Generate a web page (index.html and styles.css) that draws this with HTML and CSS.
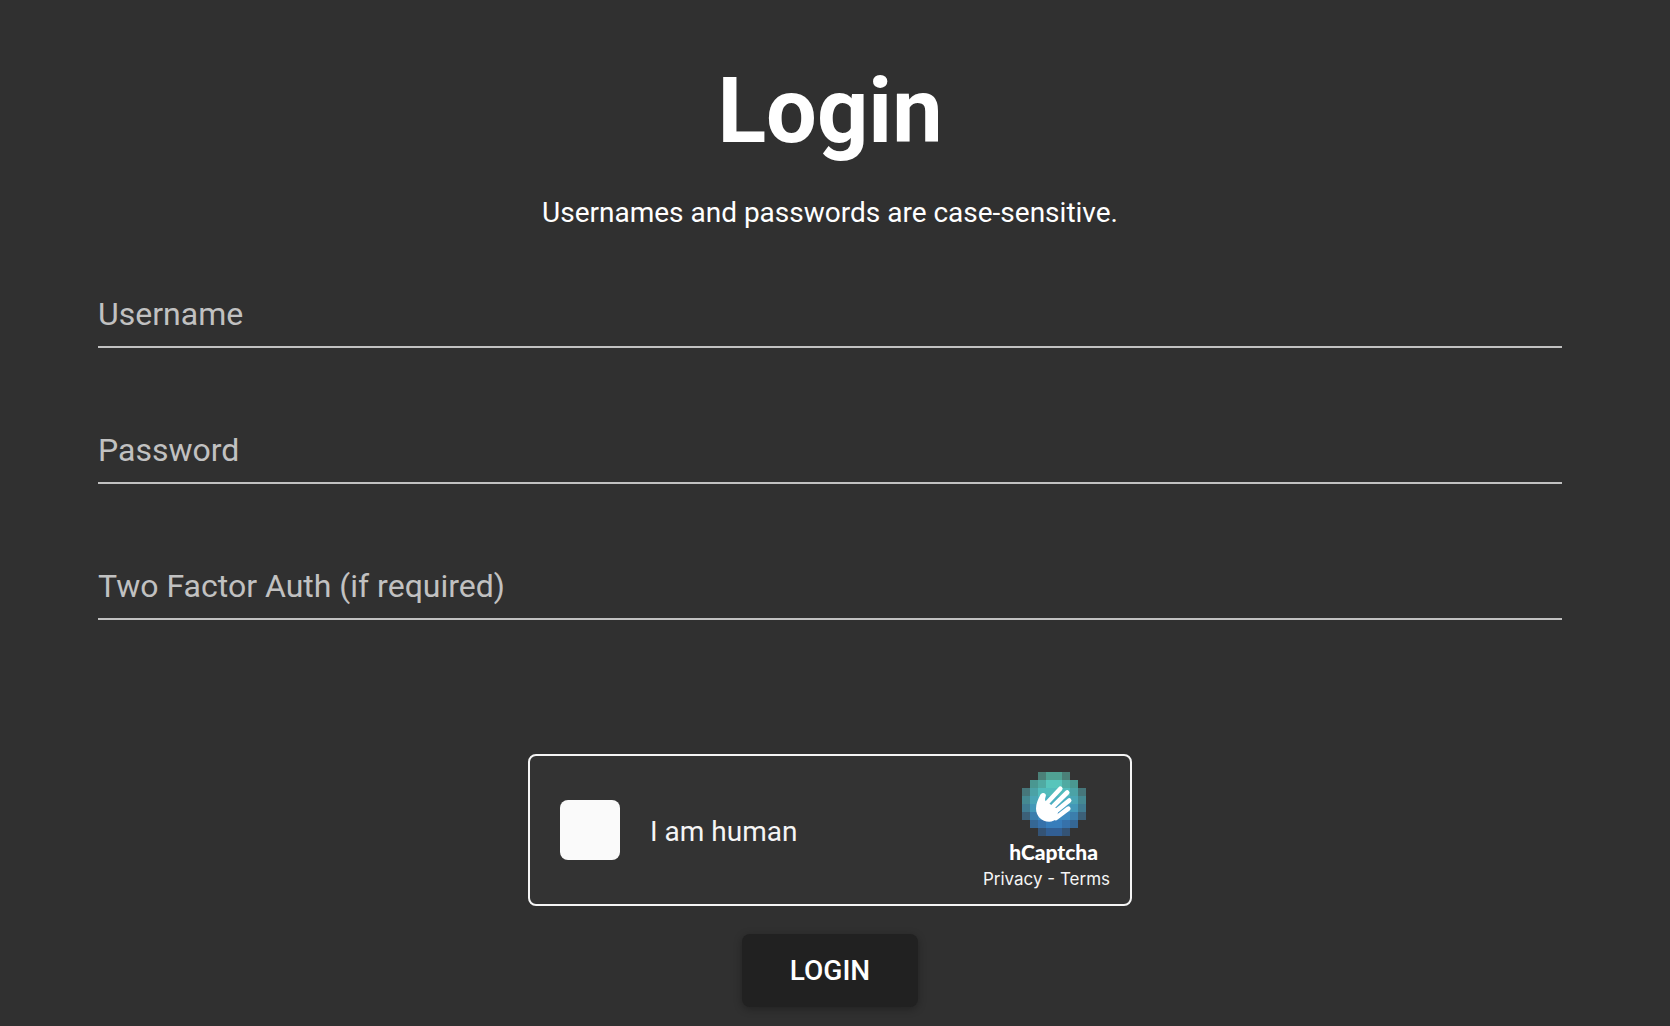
FILE: index.html
```
<!DOCTYPE html>
<html lang="en">
<head>
<meta charset="utf-8">
<meta name="viewport" content="width=device-width, initial-scale=1">
<title>Login</title>
<link rel="stylesheet" href="styles.css">
</head>
<body>
<main class="page">
  <h1 class="title">Login</h1>
  <p class="note">Usernames and passwords are case-sensitive.</p>
  <form class="form">
    <div class="field">
      <label class="field-label" for="username">Username</label>
      <input class="field-input" id="username" type="text">
    </div>
    <div class="field">
      <label class="field-label" for="password">Password</label>
      <input class="field-input" id="password" type="password">
    </div>
    <div class="field">
      <label class="field-label" for="code">Two Factor Auth (if required)</label>
      <input class="field-input" id="code" type="text">
    </div>
    <div class="captcha">
      <input class="captcha-box" id="human" type="checkbox">
      <label class="captcha-label" for="human">I am human</label>
      <div class="brand">
        <div class="brand-mark">
          <svg class="brand-logo" viewBox="0 0 64 64" width="64" height="64" aria-hidden="true" shape-rendering="crispEdges">
            <path fill="#4b8078" d="M16 0h8v8h-8zM40 0h8v8h-8z"/>
            <path fill="#50a294" d="M24 0h16v8h-16z"/>
            <path fill="#4a9791" d="M8 8h8v8h-8zM48 8h8v8h-8z"/>
            <path fill="#50aaa2" d="M16 8h8v8h-8zM40 8h8v8h-8z"/>
            <path fill="#57c5bb" d="M24 8h16v8h-16z"/>
            <path fill="#46767a" d="M0 16h8v8h-8zM56 16h8v8h-8z"/>
            <path fill="#4ba2a6" d="M8 16h8v8h-8zM48 16h8v8h-8z"/>
            <path fill="#51bbbb" d="M16 16h32v8h-32z"/>
            <path fill="#458992" d="M0 24h8v8h-8zM56 24h8v8h-8z"/>
            <path fill="#4aa5b5" d="M8 24h8v8h-8zM48 24h8v8h-8z"/>
            <path fill="#4bb0c0" d="M16 24h32v8h-32z"/>
            <path fill="#407c92" d="M0 32h8v8h-8zM56 32h8v8h-8z"/>
            <path fill="#4398b8" d="M8 32h8v8h-8zM48 32h8v8h-8z"/>
            <path fill="#45a0c4" d="M16 32h32v8h-32z"/>
            <path fill="#3c6078" d="M0 40h8v8h-8zM56 40h8v8h-8z"/>
            <path fill="#3b7eac" d="M8 40h8v8h-8zM48 40h8v8h-8z"/>
            <path fill="#3d8bc0" d="M16 40h32v8h-32z"/>
            <path fill="#356794" d="M8 48h8v8h-8zM48 48h8v8h-8z"/>
            <path fill="#3671aa" d="M16 48h8v8h-8zM40 48h8v8h-8z"/>
            <path fill="#377dbb" d="M24 48h16v8h-16z"/>
            <path fill="#345375" d="M16 56h8v8h-8zM40 56h8v8h-8z"/>
            <path fill="#325f94" d="M24 56h16v8h-16z"/>
            <g shape-rendering="auto" fill="none" stroke="#fff" stroke-width="4.6" stroke-linecap="round" stroke-linejoin="round">
              <path d="M38.3 16.8L25 31M45.2 20.5L30 35.5M47.2 28.5L33 40M46.3 36.7L34 46"/>
              <path fill="#fff" stroke="none" d="M18.5 22.5c1.800-2.500 5.500-1.900 5.400 1.100-.1 1.600-1.600 3.800-.4 5.400l12.500 8.500-.5 8.800c-3 2.300-5 3.500-8.300 3.500-7.500 0-13.200-5.800-13.200-13.200 0-5 2.300-10 4.500-14.100z"/>
            </g>
          </svg>
          <span class="brand-name">hCaptcha</span>
        </div>
        <span class="brand-links"><a class="link" href="#privacy">Privacy</a> - <a class="link" href="#terms">Terms</a></span>
      </div>
    </div>
    <button class="submit" type="submit">LOGIN</button>
  </form>
</main>
</body>
</html>
```
FILE: styles.css
```
* { box-sizing: border-box; }
body {
  margin: 0;
  background: #303030;
  color: #fff;
  font-family: Roboto, sans-serif;
}
.page {
  padding: 58px 108px 19px 98px;
}
.title {
  margin: 0;
  font-size: 90px;
  line-height: 108px;
  font-weight: 700;
  text-align: center;
}
.note {
  margin: 27px 0 55px;
  font-size: 28px;
  line-height: 40px;
  text-align: center;
}
.form {
  display: flex;
  flex-direction: column;
  align-items: center;
}
.field {
  display: grid;
  width: 100%;
  margin-bottom: 76px;
}
.field-label, .field-input {
  grid-area: 1 / 1;
  font: 32px/40px Roboto, sans-serif;
}
.field-label {
  padding-top: 6px;
  color: #c1c1c1;
  pointer-events: none;
}
.field-input {
  width: 100%;
  height: 60px;
  padding: 6px 0 12px;
  border: 0;
  border-bottom: 2px solid #c1c1c1;
  outline: 0;
  background: transparent;
  color: #fff;
}
.captcha {
  display: flex;
  align-items: center;
  width: 604px;
  max-width: 100%;
  height: 152px;
  margin: 58px 0 28px;
  padding: 0 20px 0 30px;
  border: 2px solid #f5f5f5;
  border-radius: 8px;
  background: #333;
}
.captcha-box {
  appearance: none;
  flex: none;
  width: 60px;
  height: 60px;
  margin: 0 30px 0 0;
  border-radius: 8px;
  background: #fafafa;
}
.captcha-label {
  flex: 1;
  padding-top: 4px;
  color: #f5f5f5;
  font-size: 28px;
  line-height: 36px;
}
.brand {
  display: flex;
  flex-direction: column;
  align-items: flex-end;
  padding-top: 2px;
}
.brand-mark {
  display: flex;
  flex-direction: column;
  align-items: center;
  margin-right: 12px;
}
.brand-name {
  margin-top: 4px;
  font: 900 21px/24px Lato, sans-serif;
}
.brand-links {
  margin-top: 4px;
  color: #f5f5f5;
  font: 17px/22px Inter, sans-serif;
}
.link {
  color: inherit;
  text-decoration: none;
}
.submit {
  height: 73px;
  padding: 0 48px;
  border: 0;
  border-radius: 8px;
  background: #212121;
  box-shadow: 0 2px 8px rgba(0, 0, 0, .3);
  color: #fff;
  font: 500 28px/48px Roboto, sans-serif;
}
```
